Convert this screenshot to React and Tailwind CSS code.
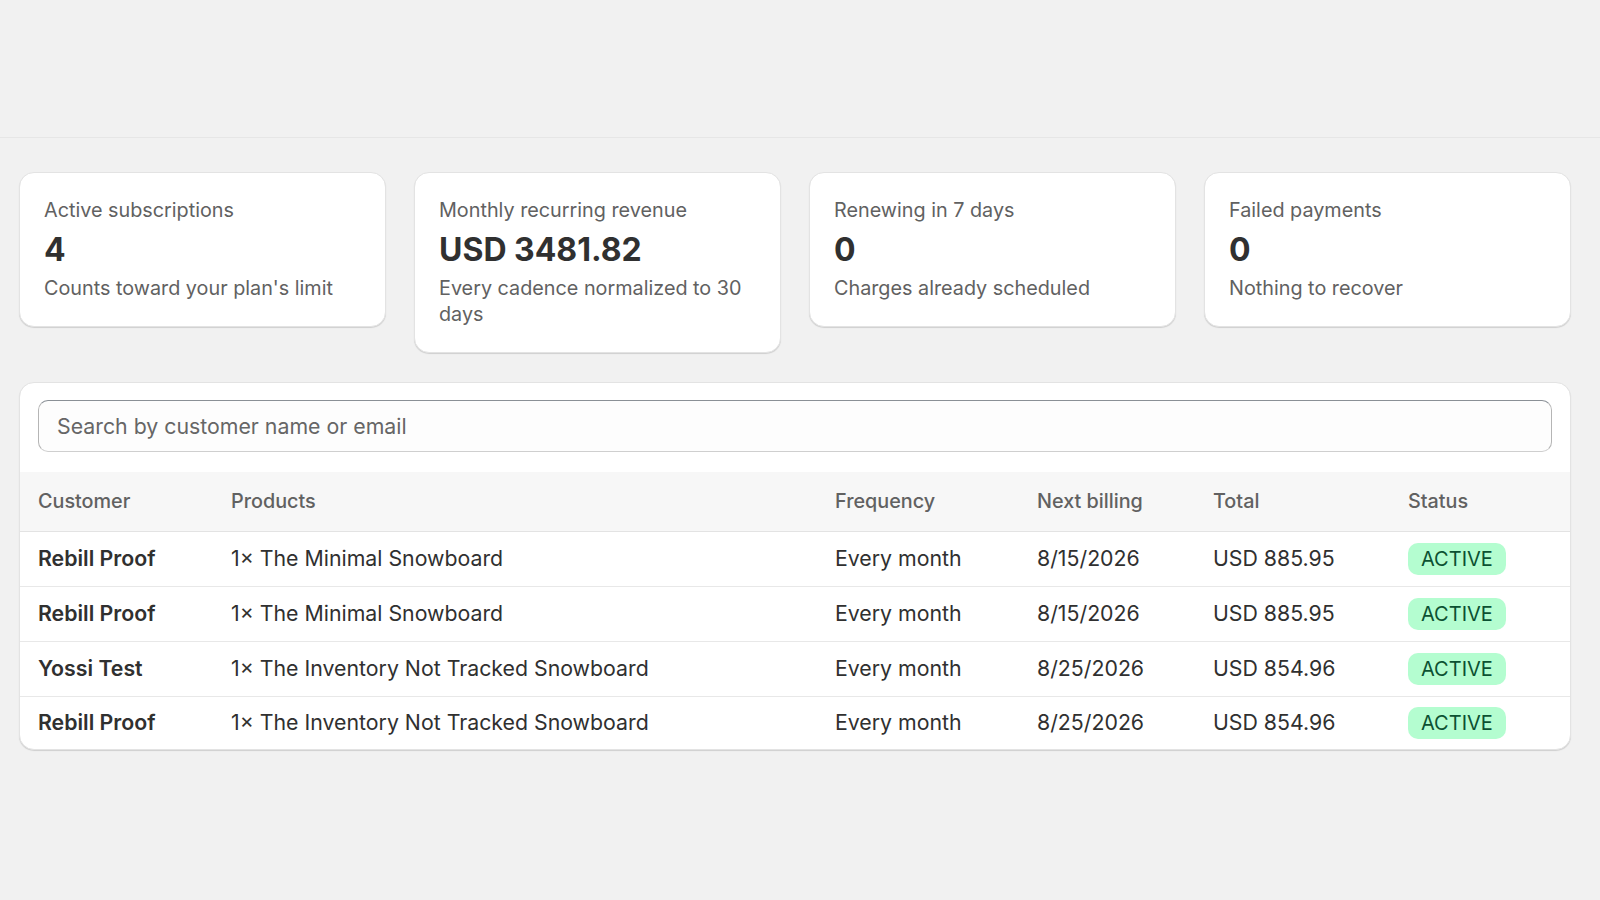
import React from "react";

const stats = [
  { label: "Active subscriptions", value: "4", note: "Counts toward your plan's limit" },
  { label: "Monthly recurring revenue", value: "USD 3481.82", note: "Every cadence normalized to 30 days" },
  { label: "Renewing in 7 days", value: "0", note: "Charges already scheduled" },
  { label: "Failed payments", value: "0", note: "Nothing to recover" },
];

const rows = [
  { customer: "Rebill Proof", product: "1× The Minimal Snowboard", freq: "Every month", next: "8/15/2026", total: "USD 885.95" },
  { customer: "Rebill Proof", product: "1× The Minimal Snowboard", freq: "Every month", next: "8/15/2026", total: "USD 885.95" },
  { customer: "Yossi Test", product: "1× The Inventory Not Tracked Snowboard", freq: "Every month", next: "8/25/2026", total: "USD 854.96" },
  { customer: "Rebill Proof", product: "1× The Inventory Not Tracked Snowboard", freq: "Every month", next: "8/25/2026", total: "USD 854.96" },
];

const cols = "grid grid-cols-[193px_604px_202px_176px_195px_1fr] items-center";

function StatCard({ label, value, note }) {
  return (
    <div className="rounded-[15px] border border-[#e3e3e3] bg-white px-[24px] pb-[25px] pt-[24px] shadow-[0_1px_1px_rgba(0,0,0,0.14)]">
      <p className="text-[19.8px] leading-[26px] text-[#616161]">{label}</p>
      <p className="mt-[9px] text-[32px] font-bold leading-[36px] text-[#303030]">{value}</p>
      <p className="mt-[7px] text-[19.8px] leading-[26px] text-[#616161]">{note}</p>
    </div>
  );
}

export default function App() {
  return (
    <div className="min-h-screen bg-[#f1f1f1] font-['Inter','Noto_Sans',sans-serif] text-[#303030]">
      <div className="h-[138px] border-b border-[#e6e6e6]" />

      <main className="pl-[19px] pr-[29px] pt-[34px]">
        <div className="grid grid-cols-4 items-start gap-[28px]">
          {stats.map((s) => (
            <StatCard key={s.label} {...s} />
          ))}
        </div>

        <section className="mt-[29px] overflow-hidden rounded-[15px] border border-[#e3e3e3] bg-white shadow-[0_1px_1px_rgba(0,0,0,0.14)]">
          <div className="px-[18px] pb-[20px] pt-[17px]">
            <input
              type="text"
              placeholder="Search by customer name or email"
              className="h-[52px] w-full rounded-[10px] border border-[#b5b5b5] border-b-[#cfcfcf] border-t-[#8a9096] bg-[#fdfdfd] pl-[18px] text-[21.3px] text-[#303030] outline-none placeholder:text-[#666666]"
            />
          </div>

          <div className={`${cols} h-[60px] border-b border-[#e3e3e3] bg-[#f7f7f7] text-[19.8px] font-medium text-[#616161]`}>
            <div className="px-[18px]">Customer</div>
            <div className="px-[18px]">Products</div>
            <div className="px-[18px]">Frequency</div>
            <div className="px-[18px]">Next billing</div>
            <div className="px-[18px]">Total</div>
            <div className="px-[18px]">Status</div>
          </div>

          {rows.map((r, i) => (
            <div
              key={i}
              className={`${cols} text-[21.3px] ${i === 0 ? "h-[54px]" : i === rows.length - 1 ? "h-[53px] border-t border-[#e8e8e8]" : "h-[55px] border-t border-[#e8e8e8]"}`}
            >
              <div className="px-[18px] font-semibold">{r.customer}</div>
              <div className="px-[18px]">{r.product}</div>
              <div className="px-[18px]">{r.freq}</div>
              <div className="px-[18px]">{r.next}</div>
              <div className="px-[18px]">{r.total}</div>
              <div className="px-[18px]">
                <span className="inline-flex h-[32px] items-center rounded-[10px] bg-[#b4fdd0] px-[13px] text-[20px] text-[#0c5132]">
                  ACTIVE
                </span>
              </div>
            </div>
          ))}
        </section>
      </main>
    </div>
  );
}
